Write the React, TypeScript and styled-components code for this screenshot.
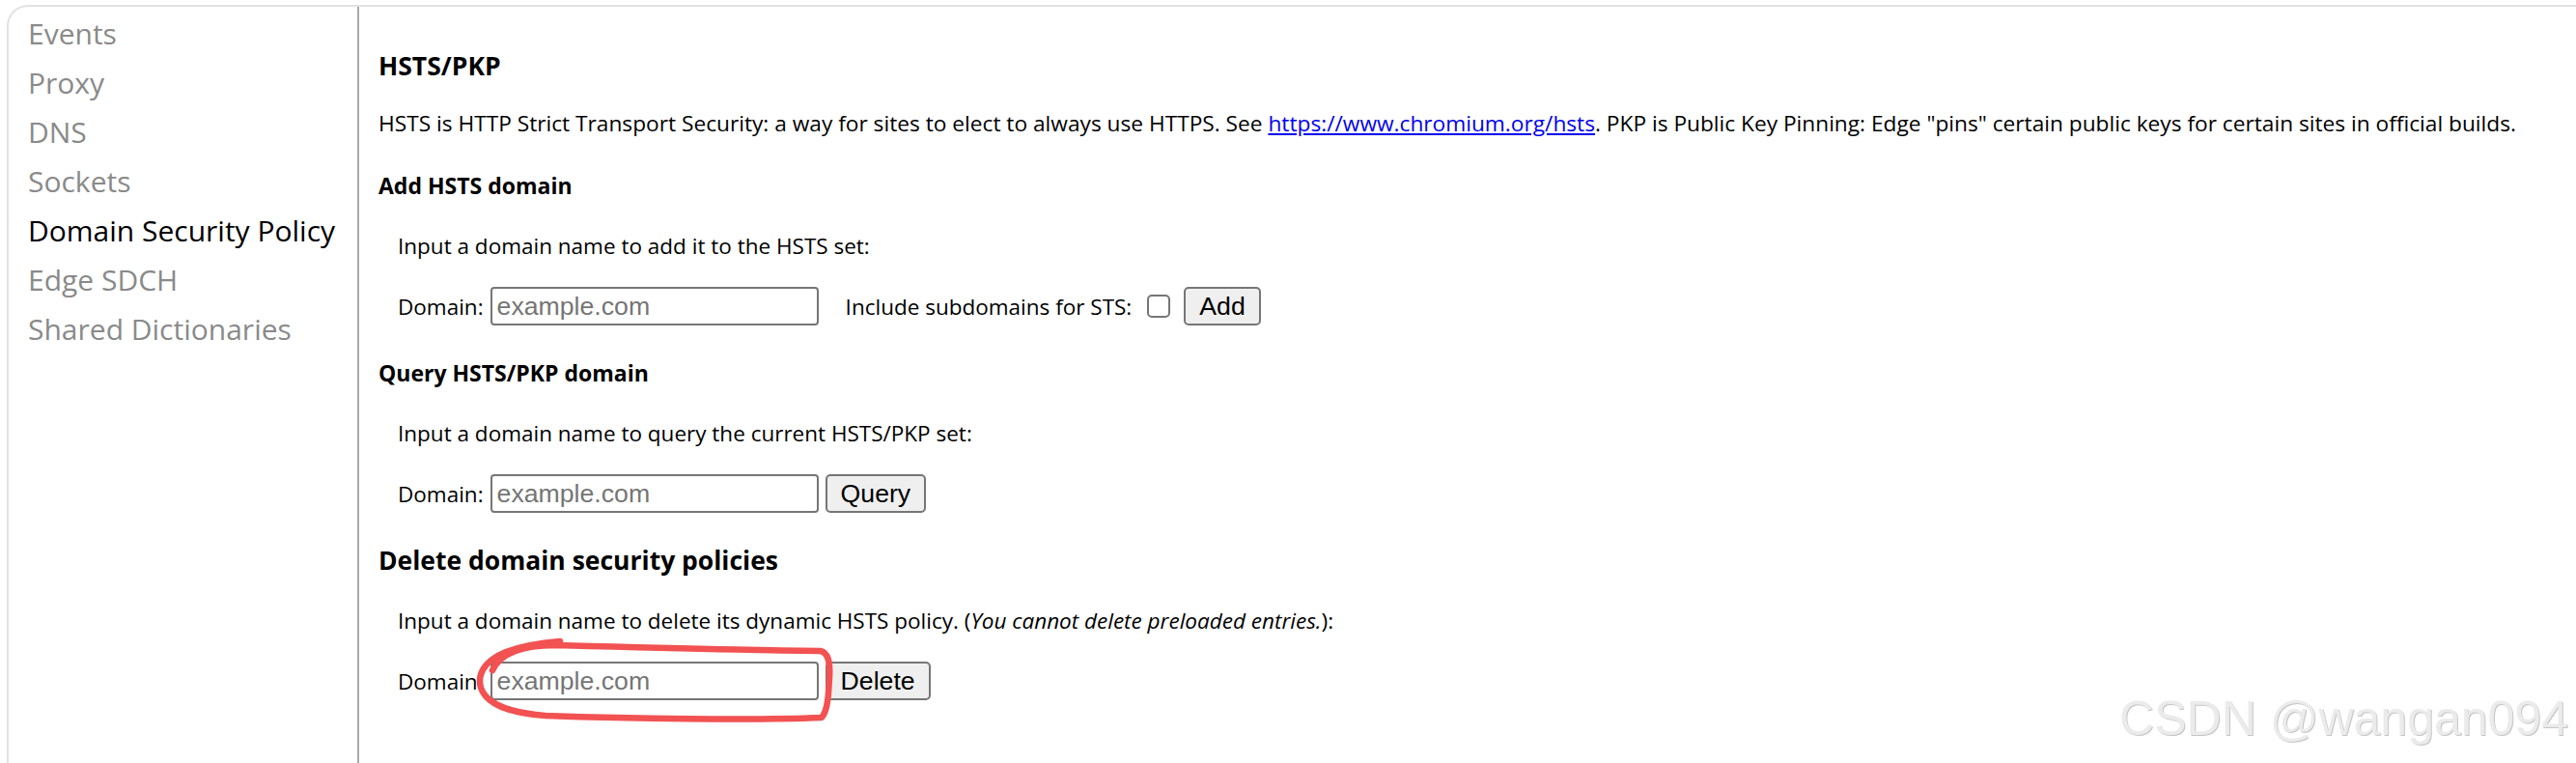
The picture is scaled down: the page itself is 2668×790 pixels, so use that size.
import React from "react";
import styled, { createGlobalStyle } from "styled-components";

const GlobalStyle = createGlobalStyle`
  html, body {
    margin: 0;
    padding: 0;
    background: #ffffff;
  }
  body {
    font-family: "Open Sans", "Noto Sans", sans-serif;
    color: #000000;
  }
`;

const Page = styled.div`
  position: relative;
  width: 2668px;
  height: 790px;
  overflow: hidden;
  box-sizing: border-box;
  padding: 5px 0 0 7px;
`;

// outer panel, only its top-left corner is visible
const Frame = styled.div`
  display: flex;
  height: 100%;
  box-sizing: border-box;
  border-top: 2px solid #e2e2e2;
  border-left: 2px solid #e2e2e2;
  border-top-left-radius: 22px;
`;

const Sidebar = styled.nav`
  width: 363px;
  flex-shrink: 0;
  box-sizing: border-box;
  padding: 2px 0 0 20px;
  border-right: 2px solid #a8a8a8;
  display: flex;
  flex-direction: column;
`;

const NavItem = styled.a<{ $active?: boolean }>`
  font-size: 30px;
  line-height: 51px;
  white-space: nowrap;
  text-decoration: none;
  color: ${(p) => (p.$active ? "#000000" : "#8a8a8a")};
  cursor: pointer;
`;

const Main = styled.main`
  flex: 1;
  padding: 46px 0 0 20px;
`;

const Title = styled.h2<{ $small?: boolean }>`
  margin: 0;
  font-size: ${(p) => (p.$small ? "23px" : "26.5px")};
  line-height: 30px;
  font-weight: 700;
`;

const Intro = styled.p`
  margin: 30px 0 0;
  font-size: 22.7px;
  line-height: 30px;
  white-space: nowrap;
`;

const Link = styled.a`
  color: #0000ee;
  text-decoration: underline;
`;

const Section = styled.section`
  margin-top: 34px;
`;

const Form = styled.div`
  padding-left: 20px;
`;

const Desc = styled.p`
  margin: 33px 0 0;
  font-size: 22.5px;
  line-height: 30px;
  white-space: nowrap;
`;

const Row = styled.div`
  display: flex;
  align-items: center;
  height: 40px;
  margin-top: 27px;
  font-size: 22.5px;
`;

const Label = styled.label<{ $gap?: number }>`
  margin-left: ${(p) => p.$gap ?? 0}px;
  white-space: nowrap;
`;

const TextInput = styled.input`
  width: 340px;
  height: 40px;
  box-sizing: border-box;
  margin-left: 7px;
  padding: 2px 5px;
  border: 2px solid #767676;
  border-radius: 4px;
  font-family: "Liberation Sans", Arial, sans-serif;
  font-size: 26.67px;
  color: #000000;
  background: #ffffff;
  outline: none;
  &::placeholder {
    color: #757575;
  }
`;

const Check = styled.input`
  appearance: none;
  width: 24px;
  height: 24px;
  margin: 0 0 0 16px;
  box-sizing: border-box;
  border: 2px solid #767676;
  border-radius: 5px;
  background: #ffffff;
`;

const Button = styled.button<{ $gap?: number }>`
  height: 40px;
  box-sizing: border-box;
  margin-left: ${(p) => p.$gap ?? 7}px;
  padding: 0 14px;
  border: 2px solid #767676;
  border-radius: 5px;
  background: #efefef;
  color: #000000;
  font-family: "Liberation Sans", Arial, sans-serif;
  font-size: 26.67px;
`;

const Watermark = styled.div`
  position: absolute;
  right: 8px;
  top: 714px;
  font-family: "Liberation Sans", Arial, sans-serif;
  font-size: 50px;
  line-height: 60px;
  color: #ebebeb;
  text-shadow: 1px 1px 0 #c6c6c6;
  white-space: nowrap;
  pointer-events: none;
`;

// red hand-drawn circle around the last input
const Scribble = styled.svg`
  position: absolute;
  left: 0;
  top: 0;
  pointer-events: none;
`;

const navItems = [
  "Events",
  "Proxy",
  "DNS",
  "Sockets",
  "Domain Security Policy",
  "Edge SDCH",
  "Shared Dictionaries",
];

export default function App() {
  return (
    <>
      <GlobalStyle />
      <Page>
        <Frame>
          <Sidebar>
            {navItems.map((item) => (
              <NavItem key={item} $active={item === "Domain Security Policy"}>
                {item}
              </NavItem>
            ))}
          </Sidebar>

          <Main>
            <Title>HSTS/PKP</Title>
            <Intro>
              HSTS is HTTP Strict Transport Security: a way for sites to elect to always use HTTPS. See{" "}
              <Link href="#">https://www.chromium.org/hsts</Link>. PKP is Public Key Pinning: Edge "pins" certain
              public keys for certain sites in official builds.
            </Intro>

            <Section>
              <Title $small>Add HSTS domain</Title>
              <Form>
                <Desc>Input a domain name to add it to the HSTS set:</Desc>
                <Row>
                  <Label>Domain:</Label>
                  <TextInput placeholder="example.com" />
                  <Label $gap={28}>Include subdomains for STS:</Label>
                  <Check type="checkbox" />
                  <Button $gap={14}>Add</Button>
                </Row>
              </Form>
            </Section>

            <Section>
              <Title $small>Query HSTS/PKP domain</Title>
              <Form>
                <Desc>Input a domain name to query the current HSTS/PKP set:</Desc>
                <Row>
                  <Label>Domain:</Label>
                  <TextInput placeholder="example.com" />
                  <Button>Query</Button>
                </Row>
              </Form>
            </Section>

            <Section>
              <Title>Delete domain security policies</Title>
              <Form>
                <Desc>
                  Input a domain name to delete its dynamic HSTS policy. (<i>You cannot delete preloaded entries.</i>):
                </Desc>
                <Row>
                  <Label>Domain:</Label>
                  <TextInput placeholder="example.com" />
                  <Button>Delete</Button>
                </Row>
              </Form>
            </Section>
          </Main>
        </Frame>

        <Scribble width="2668" height="790" viewBox="0 0 2668 790">
          <path
            d="M 510 694 C 518 677, 540 668, 575 668 C 650 670, 760 673, 850 674 C 858 676, 860 686, 859 702 C 858 722, 857 736, 851 743 C 780 746, 650 744, 565 741 C 528 738, 504 730, 498 712 C 494 698, 502 684, 524 675 C 540 669, 556 666, 580 664"
            fill="none"
            stroke="#f25252"
            strokeWidth="6.5"
            strokeLinecap="round"
            strokeLinejoin="round"
          />
        </Scribble>

        <Watermark>CSDN @wangan094</Watermark>
      </Page>
    </>
  );
}
